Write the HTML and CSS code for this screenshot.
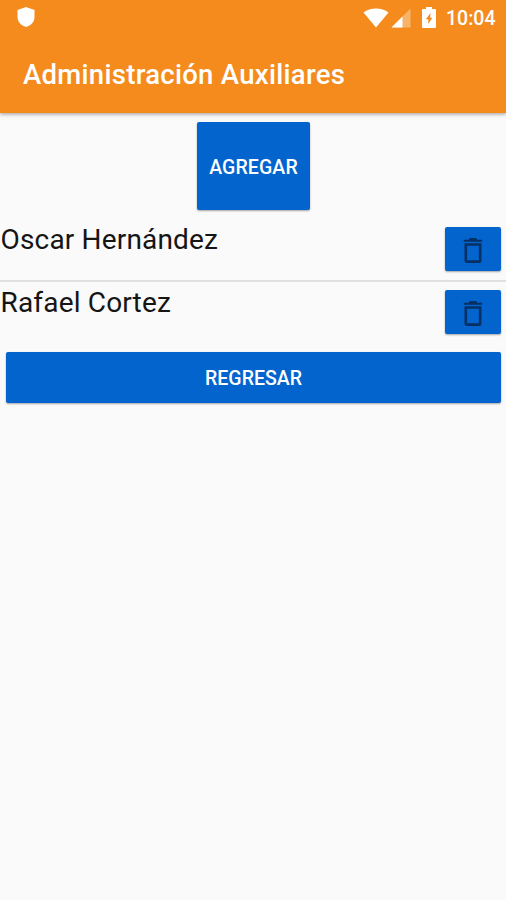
FILE: index.html
```html
<!DOCTYPE html>
<html lang="es">
<head>
<meta charset="utf-8">
<title>Administración Auxiliares</title>
<link rel="stylesheet" href="styles.css">
</head>
<body>
<header class="header">
  <div class="status">
    <svg class="shield" width="18" height="20" viewBox="0 0 18 20"><path d="M9 0L17.5 3V10C17.5 15 14 18.5 9 20C4 18.5 .5 15 .5 10V3Z" fill="#fff"/></svg>
    <div class="indicators">
      <svg class="wifi" width="26" height="20" viewBox="0 0 26 20"><path d="M.5 4.5C7-1 19-1 25.5 4.5L13 19.5Z" fill="#fff"/></svg>
      <svg class="signal" width="20" height="20" viewBox="0 0 20 20"><path d="M19.5 .5V19.5H.5Z" fill="#fff" fill-opacity=".35"/><path d="M11.5 8.5V19.5H.5Z" fill="#fff"/></svg>
      <svg class="battery" width="14" height="21" viewBox="0 0 14 21"><path fill-rule="evenodd" d="M4 0H10V2H13Q14 2 14 3V20Q14 21 13 21H1Q0 21 0 20V3Q0 2 1 2H4ZM8.5 6L3.8 12.3H6.3V17L10.4 10.7H8.1Z" fill="#fff"/></svg>
      <span class="clock">10:04</span>
    </div>
  </div>
  <h1 class="title">Administración Auxiliares</h1>
</header>
<main>
  <button class="button add">AGREGAR</button>
  <ul class="list">
    <li class="row">
      <span class="name">Oscar Hernández</span>
      <button class="button delete" aria-label="Eliminar"><svg width="20" height="26" viewBox="0 0 20 26"><path d="M.8 2.8H5.5L7 .9H13L14.5 2.8H19.2V4.8H.8Z" fill="#043064"/><path d="M2.8 7.5H17.2V23.4Q17.2 24.6 16 24.6H4Q2.8 24.6 2.8 23.4Z" fill="none" stroke="#043064" stroke-width="2.6"/></svg></button>
    </li>
    <li class="row">
      <span class="name">Rafael Cortez</span>
      <button class="button delete" aria-label="Eliminar"><svg width="20" height="26" viewBox="0 0 20 26"><path d="M.8 2.8H5.5L7 .9H13L14.5 2.8H19.2V4.8H.8Z" fill="#043064"/><path d="M2.8 7.5H17.2V23.4Q17.2 24.6 16 24.6H4Q2.8 24.6 2.8 23.4Z" fill="none" stroke="#043064" stroke-width="2.6"/></svg></button>
    </li>
  </ul>
  <button class="button back">REGRESAR</button>
</main>
</body>
</html>
```
FILE: styles.css
```css
* { box-sizing: border-box; }
body {
  margin: 0;
  min-height: 100vh;
  background: #fafafa;
  font-family: Roboto, sans-serif;
  color: #151515;
}
.header {
  height: 113px;
  background: #f48b1c;
  color: #fff;
  box-shadow: 0 1px 4px rgba(0, 0, 0, .4);
}
.status {
  height: 36px;
  padding: 0 11px 0 17px;
  display: flex;
  justify-content: space-between;
  align-items: center;
}
.status svg { display: block; }
.shield { margin-top: -2px; }
.indicators { display: flex; align-items: center; }
.wifi { margin: -1px 2px 0 0; }
.signal { margin-right: 11px; }
.battery { margin: -2px 10px 0 0; }
.clock {
  width: 49px;
  padding-top: 1px;
  font-size: 19.5px;
  font-weight: 500;
  line-height: 35px;
  white-space: nowrap;
}
.title {
  margin: 0;
  padding-left: 23px;
  font-size: 27.5px;
  font-weight: 500;
  letter-spacing: .29px;
  line-height: 78px;
  white-space: nowrap;
}
main { display: flex; flex-direction: column; }
.button {
  padding: 0;
  border: 0;
  border-radius: 2px;
  background: #0364cd;
  color: #fff;
  font: 500 19.5px Roboto, sans-serif;
  box-shadow: 0 1px 2px rgba(0, 0, 0, .35);
}
.add {
  align-self: center;
  width: 113px;
  height: 88px;
  margin-top: 9px;
  padding: 2px 0 0 1px;
  letter-spacing: .1px;
}
.list { list-style: none; margin: 8px 0 0; padding: 0; }
.row {
  display: flex;
  justify-content: space-between;
  align-items: flex-start;
  height: 63px;
  padding: 9px 5px 0 0;
}
.row + .row {
  height: 64px;
  margin-top: -1px;
  padding-top: 8px;
  border-top: 2px solid #e0e0e0;
}
.name {
  margin-top: -4px;
  padding-left: .5px;
  font-size: 28px;
  letter-spacing: .17px;
  line-height: 34px;
  white-space: nowrap;
}
.delete {
  width: 56px;
  height: 44px;
  padding-top: 1px;
  display: flex;
  justify-content: center;
  align-items: center;
}
.back { height: 51px; margin: 8px 5px 0 6px; padding-top: 2px; }
```
